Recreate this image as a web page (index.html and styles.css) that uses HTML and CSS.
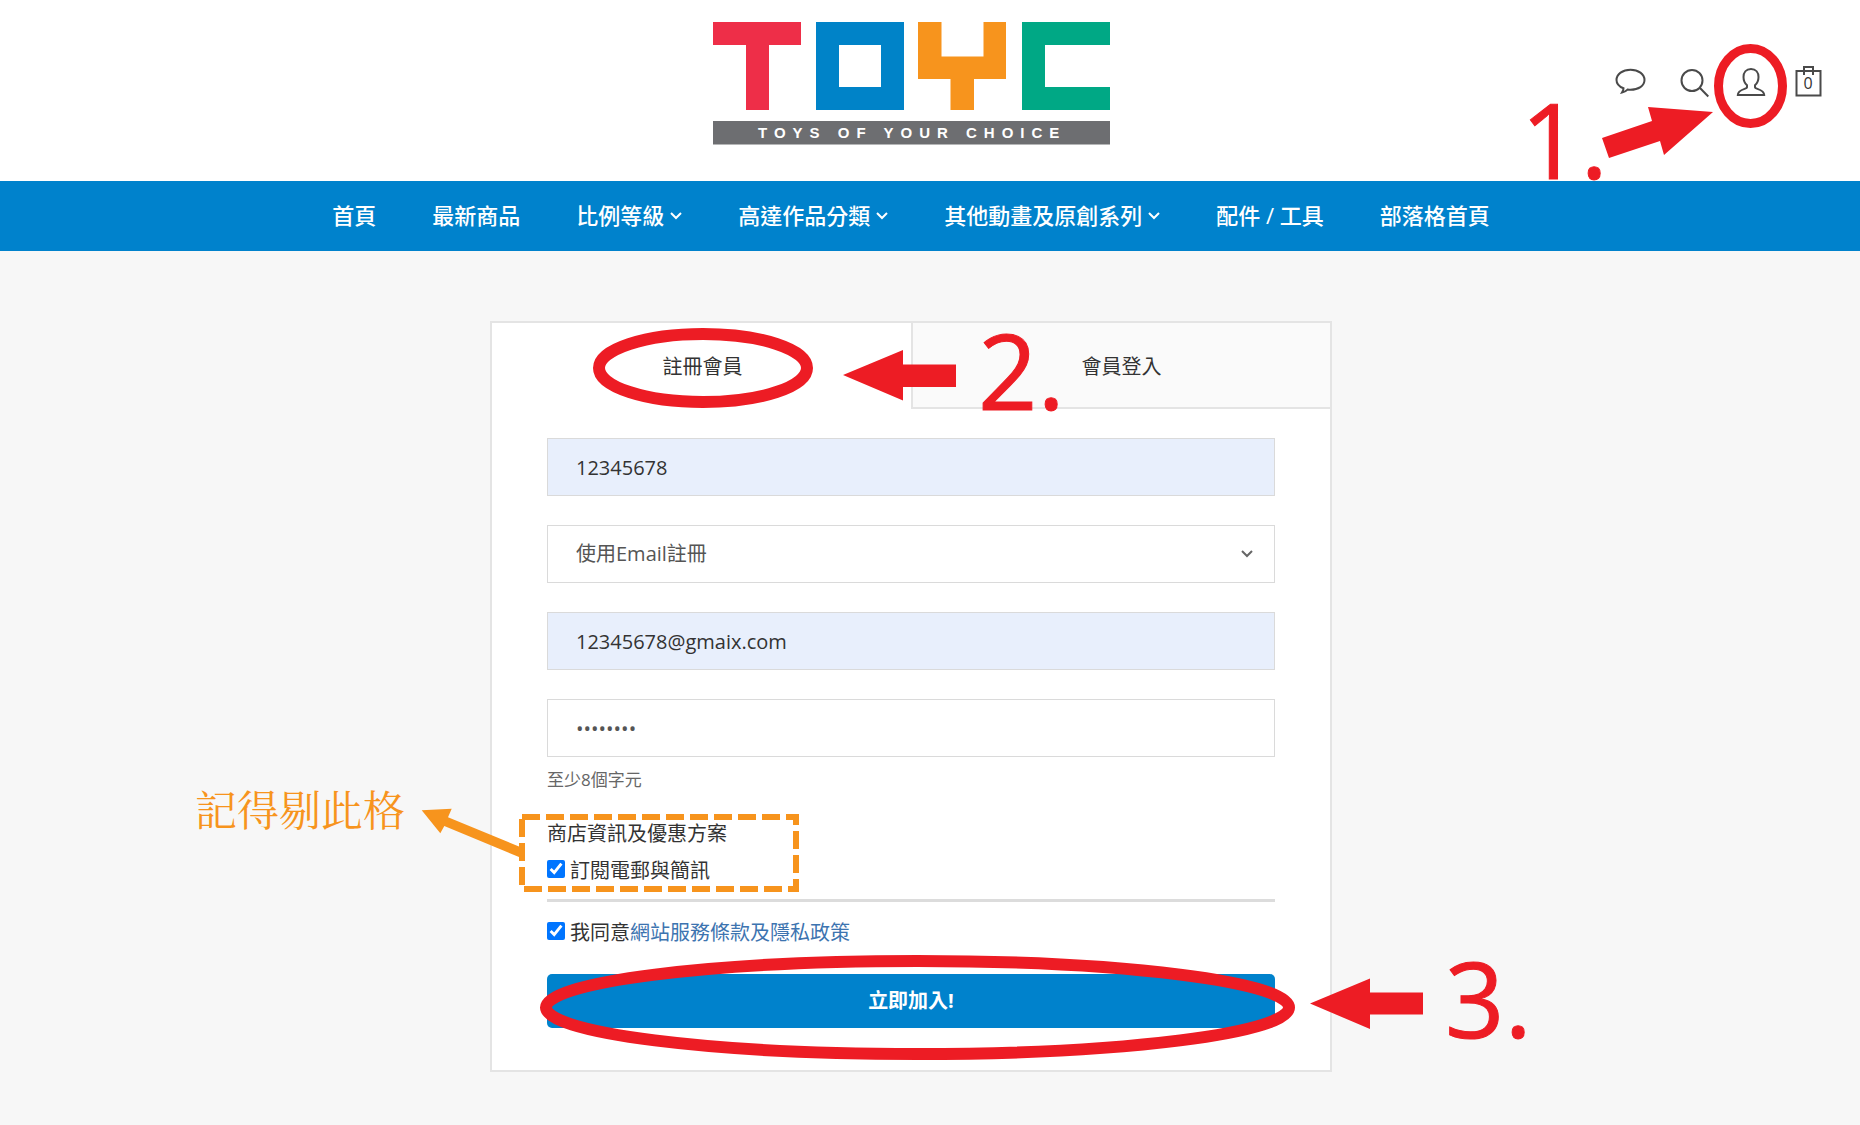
FILE: index.html
```html
<!DOCTYPE html>
<html lang="zh-Hant">
<head>
<meta charset="utf-8">
<meta name="viewport" content="width=device-width, initial-scale=1">
<title>TOYC 註冊會員</title>
<link rel="stylesheet" href="styles.css">
</head>
<body>
<header class="header">
  <a class="logo" href="#" aria-label="TOYC">
    <svg width="397" height="123" viewBox="0 0 397 123" aria-hidden="true">
      <path fill="#ee2e48" d="M0 0h88v23H56v65H33V23H0z"/>
      <path fill="#0083c8" fill-rule="evenodd" d="M103 0h88v88h-88zM126 23v42h42V23z"/>
      <path fill="#f7941d" d="M205 0h23.500v34.500h42V0H293v57h-32v31h-23.500V57H205z"/>
      <path fill="#00a885" d="M309 0h88v23h-65v42h65v23h-88z"/>
      <path fill="#6d6e71" d="M0 99h397v23.500H0z"/>
      <text class="logo-tagline" x="45" y="116">TOYS OF YOUR CHOICE</text>
    </svg>
  </a>
  <div class="tools">
    <button class="tool" type="button" aria-label="訊息">
      <svg viewBox="0 0 59 34"><path d="M22.500 24.300C18 22.600 15.500 19.500 15.500 16c0-6 6.200-10.300 14-10.300S43.500 10 43.500 16s-6.200 9.800-14 9.800c-1 0-2-.1-3-.2-1.600 1.700-3.600 2.700-5.500 3 .8-1.200 1.500-2.600 1.500-4.300z"/></svg>
    </button>
    <button class="tool" type="button" aria-label="搜尋">
      <svg viewBox="0 0 59 34"><circle cx="32" cy="16.500" r="10.500"/><path class="thick" d="M40 24l8.300 8.500"/></svg>
    </button>
    <button class="tool" type="button" aria-label="會員">
      <svg viewBox="0 0 59 34"><path d="M32 5c-5 0-7.500 3.700-7.500 8 0 3.500 1.200 6.200 3.500 8.300v2.200c0 1.500-9.200 1.700-9.200 7.500h26.400c0-5.800-9.200-6-9.200-7.500v-2.200c2.300-2.100 3.500-4.800 3.500-8.300 0-4.300-2.500-8-7.500-8z"/></svg>
    </button>
    <button class="tool" type="button" aria-label="購物車">
      <svg viewBox="0 0 59 34"><path class="thick" d="M18.500 7h24v24.500h-24zM26 11V3h9v8"/><text class="bag-count" x="30" y="25">0</text></svg>
    </button>
    <svg class="notes" width="236" height="34" viewBox="1601 64 236 34">
      <ellipse class="ring ring-small" cx="1750.500" cy="86" rx="32" ry="37.500"/>
      <path class="arrow" d="M1602 138l50-17-4-14 65 5-49 43-4-14-51 17z"/>
      <text class="step" x="1521" y="179">1.</text>
    </svg>
  </div>
</header>

<nav class="nav">
  <a href="#">首頁</a>
  <a href="#">最新商品</a>
  <a href="#">比例等級<svg class="caret" viewBox="0 0 12 8"><path d="M1 1l5 5 5-5"/></svg></a>
  <a href="#">高達作品分類<svg class="caret" viewBox="0 0 12 8"><path d="M1 1l5 5 5-5"/></svg></a>
  <a href="#">其他動畫及原創系列<svg class="caret" viewBox="0 0 12 8"><path d="M1 1l5 5 5-5"/></svg></a>
  <a href="#">配件 / 工具</a>
  <a href="#">部落格首頁</a>
</nav>

<main class="main">
  <div class="stage">
    <section class="card">
      <div class="tabs">
        <button class="tab tab-active" type="button">註冊會員</button>
        <button class="tab" type="button">會員登入</button>
      </div>
      <form class="form">
        <div class="fields">
          <input class="field filled" type="text" aria-label="姓名" value="12345678">
          <div class="select-box">
            <select class="field" aria-label="註冊方式"><option>使用Email註冊</option></select>
            <svg class="select-caret" viewBox="0 0 12 8"><path d="M1 1l5 5 5-5"/></svg>
          </div>
          <input class="field filled" type="email" aria-label="Email" value="12345678@gmaix.com">
          <input class="field" type="password" aria-label="密碼" value="12345678">
        </div>
        <p class="hint">至少8個字元</p>
        <p class="group-title">商店資訊及優惠方案</p>
        <label class="check"><input type="checkbox" checked><span>訂閱電郵與簡訊</span></label>
        <hr class="rule">
        <label class="check"><input type="checkbox" checked><span>我同意<a href="#">網站服務條款及隱私政策</a></span></label>
        <button class="submit" type="button">立即加入!</button>
      </form>
    </section>
    <svg class="notes" width="842" height="751" viewBox="490 321 842 751">
      <ellipse class="ring" cx="703" cy="368" rx="104" ry="34"/>
      <path class="arrow" d="M843 375l60-25v14.500h53V387h-53v13.500z"/>
      <text class="step" x="978" y="410">2.</text>
      <ellipse class="ring" cx="917.500" cy="1007.500" rx="371.500" ry="46.500"/>
      <path class="arrow" d="M1310 1003.500l60-25v14h53v22h-53v14.500z"/>
      <text class="step" x="1445" y="1038">3.</text>
      <path class="dashes" d="M522 817h274v72H522z"/>
      <path class="pointer" d="M421.700 810.300l30-1.600-3.700 8.600 74 30.400-3 9.300-74.700-31-4 7.300z"/>
      <text class="reminder" x="195" y="826">記得剔此格</text>
    </svg>
  </div>
</main>
</body>
</html>
```
FILE: styles.css
```css
* {
  box-sizing: border-box;
}

body {
  margin: 0;
  background: #f7f7f7;
  color: #333;
  font: 20px/30px "Open Sans", "Noto Sans CJK TC", sans-serif;
  overflow-x: hidden;
}

a {
  color: #3d74b0;
  text-decoration: none;
}

button,
input,
select {
  font: inherit;
  color: inherit;
}

/* Header */
.header {
  display: grid;
  grid-template-columns: 1fr auto 1fr;
  align-items: start;
  padding: 22px 38px 36px 0;
  background: #fff;
}

.logo {
  grid-column: 2;
}

.logo svg {
  display: block;
}

.logo-tagline {
  fill: #fff;
  font: bold 15px "Liberation Sans Narrow", "Liberation Sans", sans-serif;
  letter-spacing: 7px;
}

.tools {
  position: relative;
  display: flex;
  justify-self: end;
  margin: 42px -15px 0 0;
}

.tool {
  width: 59px;
  height: 34px;
  padding: 0;
  border: 0;
  background: none;
}

.tool svg {
  display: block;
  width: 59px;
  height: 34px;
  fill: none;
  stroke: #4a4a4a;
  stroke-width: 2;
}

.tool .bag-count {
  fill: #333;
  stroke: none;
  font-size: 16px;
  text-anchor: middle;
}

/* Navigation */
.nav {
  display: flex;
  justify-content: center;
  gap: 56px;
  padding: 18px 38px 20px 0;
  background: #0082cc;
  font-size: 22px;
  font-weight: 500;
  line-height: 32px;
}

.nav a {
  color: #fff;
  white-space: nowrap;
}

.caret,
.select-caret {
  width: 12px;
  height: 8px;
  fill: none;
  stroke: currentColor;
  stroke-width: 2;
}

.caret {
  margin-left: 6px;
  vertical-align: 4px;
}

/* Sign-up card */
.main {
  display: flex;
  justify-content: center;
  padding: 70px 38px 52px 0;
}

.stage {
  position: relative;
  width: 842px;
}

.card {
  border: 2px solid #e4e4e4;
  background: #fff;
}

.tabs {
  display: grid;
  grid-template-columns: 1fr 1fr;
}

.tab {
  height: 86px;
  padding: 4px 0 0;
  border: 0 solid #e4e4e4;
  border-width: 0 0 2px 2px;
  background: #fafafa;
}

.tab-active {
  border-color: transparent;
  background: #fff;
}

.form {
  padding: 29px 55px 42px;
}

.fields {
  display: grid;
  gap: 29px;
}

.field {
  display: block;
  width: 100%;
  height: 58px;
  padding: 0 28px;
  border: 1px solid #dadada;
  border-radius: 0;
  background: #fff;
  color: #555;
  appearance: none;
}

.filled {
  background: #e8effc;
  color: #333;
}

.select-box {
  position: relative;
}

.select-caret {
  position: absolute;
  top: 25px;
  right: 22px;
  color: #666;
}

.hint {
  margin: 11px 0 27px;
  color: #666;
  font-size: 17px;
  line-height: 24px;
}

.group-title {
  margin: 0 0 5px;
}

.check {
  display: flex;
  align-items: center;
  gap: 5px;
}

.check input {
  width: 18px;
  height: 18px;
  margin: 0;
  accent-color: #0075ff;
}

.check span {
  padding-top: 4px;
  line-height: 26px;
}

.rule {
  height: 3px;
  margin: 15px 0 14px;
  border: 0;
  background: #dcdcdc;
}

.submit {
  width: 100%;
  height: 54px;
  margin-top: 28px;
  padding: 0;
  border: 0;
  border-radius: 5px;
  background: #0082cc;
  color: #fff;
  font-weight: 700;
}

/* Tutorial marks drawn over the page */
.notes {
  position: absolute;
  top: 0;
  left: 0;
  overflow: visible;
  pointer-events: none;
}

.ring {
  fill: none;
  stroke: #ed1c24;
  stroke-width: 12;
}

.ring-small {
  stroke-width: 9;
}

.arrow,
.step {
  fill: #ed1c24;
}

.step {
  font-size: 104px;
  stroke: #ed1c24;
  stroke-width: 1;
}

.dashes {
  fill: none;
  stroke: #f7941d;
  stroke-width: 6;
  stroke-dasharray: 18 6;
}

.pointer,
.reminder {
  fill: #f7941d;
}

.reminder {
  font: 400 42px "Noto Serif CJK TC", "Noto Sans CJK TC", serif;
}
```
